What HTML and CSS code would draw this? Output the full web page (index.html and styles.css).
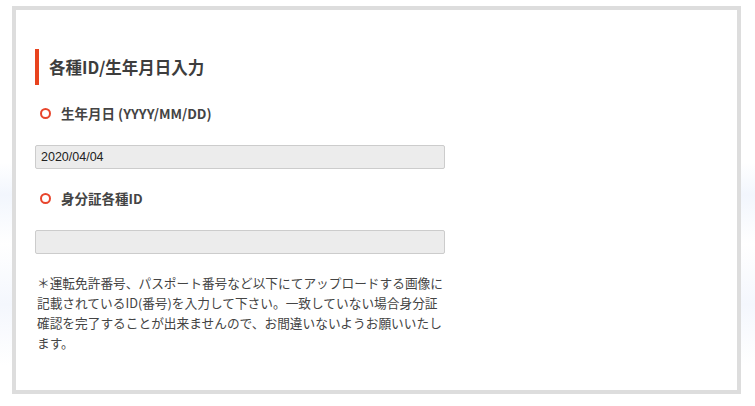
FILE: index.html
```html
<!DOCTYPE html>
<html lang="ja">
<head>
  <meta charset="UTF-8">
  <meta name="viewport" content="width=device-width, initial-scale=1.0">
  <title>各種ID/生年月日入力</title>
  <link rel="stylesheet" href="styles.css">
</head>
<body>
  <div class="panel">
    <h2 class="panel-title">各種ID/生年月日入力</h2>
    <div class="field">
      <label class="field-label" for="birthday">生年月日 (YYYY/MM/DD)</label>
      <input class="field-input" id="birthday" type="text" value="2020/04/04">
    </div>
    <div class="field">
      <label class="field-label" for="idnumber">身分証各種ID</label>
      <input class="field-input" id="idnumber" type="text" value="">
    </div>
    <p class="note">＊運転免許番号、パスポート番号など以下にてアップロードする画像に記載されているID(番号)を入力して下さい。一致していない場合身分証確認を完了することが出来ませんので、お間違いないようお願いいたします。</p>
  </div>
</body>
</html>
```

FILE: styles.css
```css
body {
  margin: 0;
  background: linear-gradient(to bottom, #fff 0%, #fff 40%, #f2f6fd 48%, #fff 60%, #f4f7fd 75%, #fff 90%);
  font-family: "Noto Sans CJK JP", "Noto Sans", sans-serif;
  color: #444;
}
.panel {
  margin: 6px 14px 12px 12px;
  background: #fff;
  border: 4px solid #dddddd;
  padding: 39px 19px 0 19px;
  box-sizing: border-box;
  height: 388px;
}
.panel-title {
  margin: 0 0 18px 0;
  border-left: 4px solid #e8431e;
  padding-left: 10px;
  height: 36px;
  line-height: 36px;
  font-size: 16.5px;
  font-weight: bold;
  color: #3d3d3d;
}
.field {
  margin-bottom: 19px;
}
.field-label {
  display: flex;
  align-items: center;
  height: 20px;
  padding-left: 5px;
  font-size: 13.5px;
  font-weight: bold;
  color: #444;
}
.field-label::before {
  content: "";
  width: 7px;
  height: 7px;
  border: 2.5px solid #e8452c;
  border-radius: 50%;
  margin-right: 10px;
}
.field-input {
  display: block;
  margin-top: 22px;
  width: 410px;
  height: 24px;
  box-sizing: border-box;
  background: #ececec;
  border: 1px solid #cccccc;
  border-radius: 2px;
  padding: 0 5px;
  font-family: "Liberation Sans", Arial, sans-serif;
  font-size: 12.5px;
  color: #222;
}
.note {
  margin: 0;
  width: 412px;
  padding-left: 2px;
  font-size: 12.7px;
  line-height: 20px;
  color: #444;
}
```
